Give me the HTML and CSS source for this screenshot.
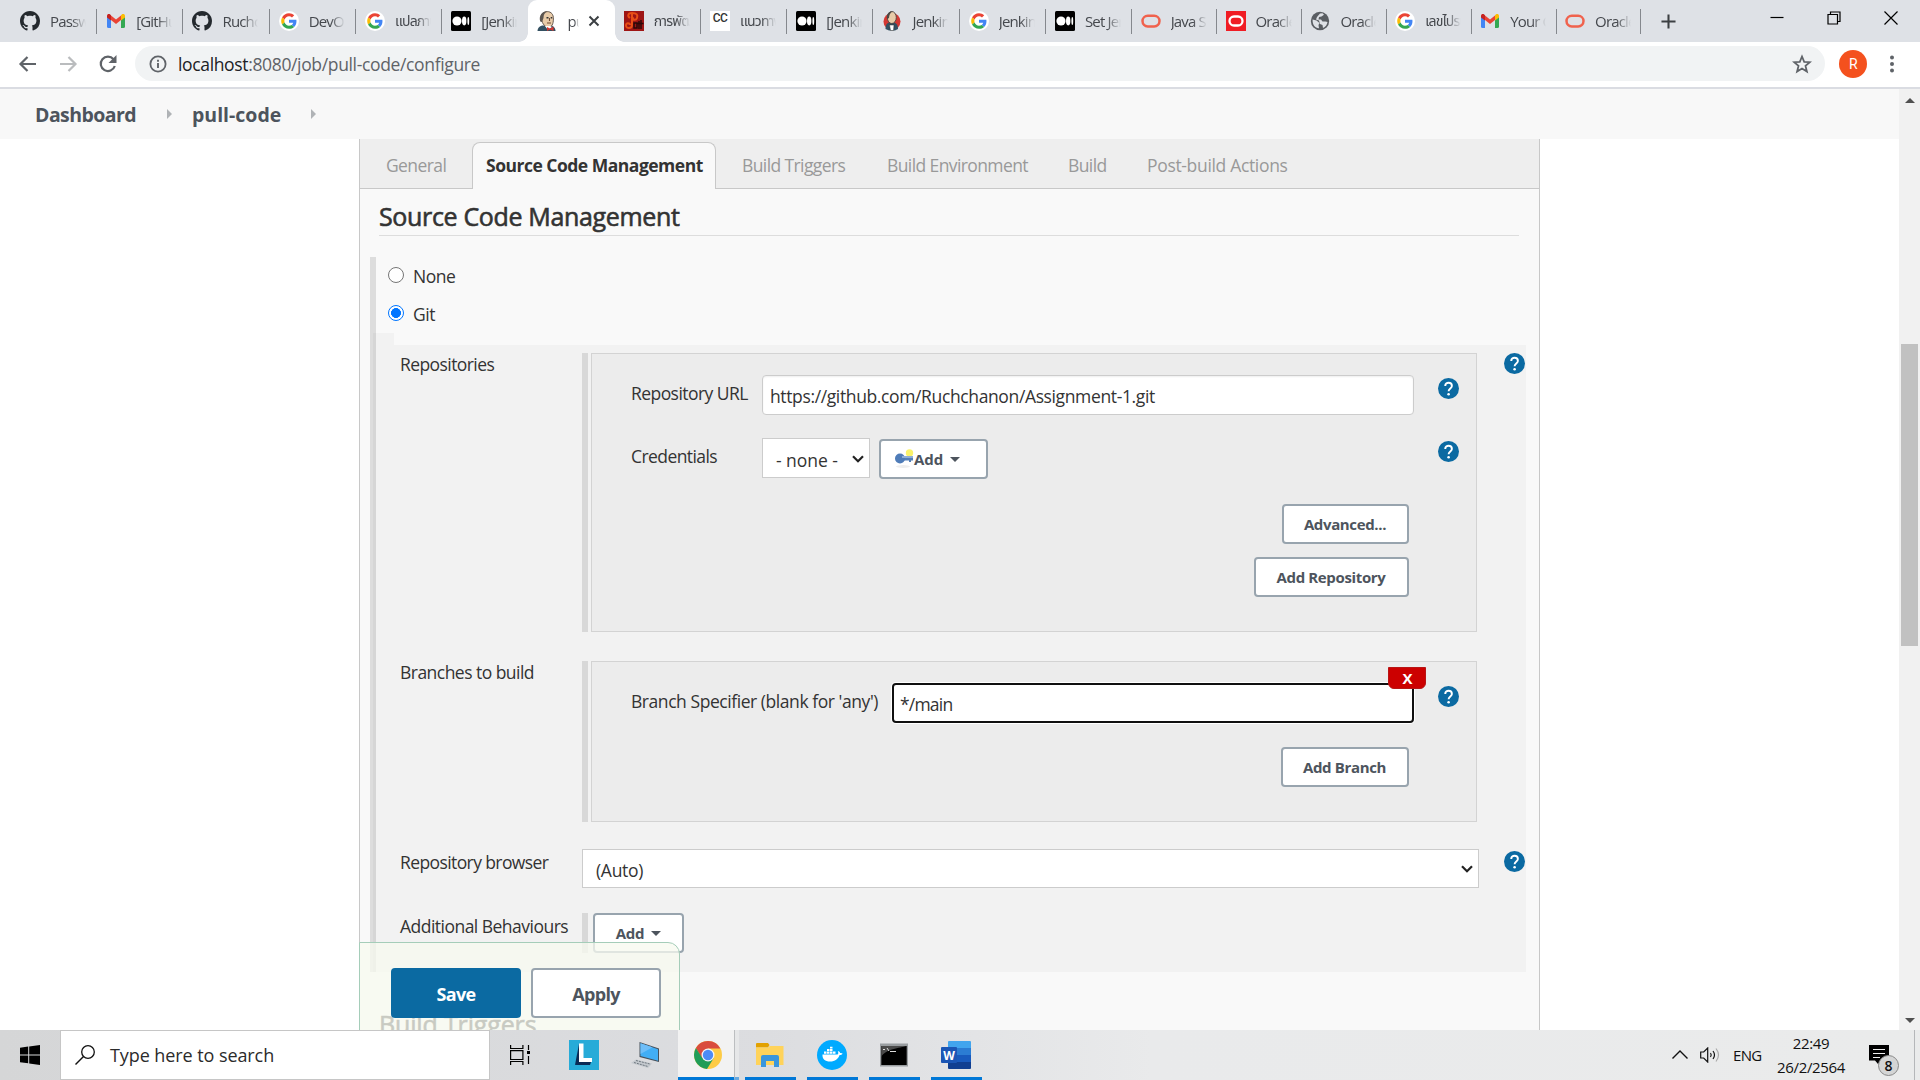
FILE: index.html
```html
<!DOCTYPE html>
<html lang="en">
<head>
<meta charset="utf-8">
<title>pull-code Config [Jenkins]</title>
<link rel="stylesheet" href="styles.css">
</head>
<body>
<svg class="defs" aria-hidden="true">
  <symbol id="github" viewBox="0 0 16 16"><path fill="#24292e" d="M8 0C3.58 0 0 3.58 0 8c0 3.54 2.29 6.53 5.47 7.59.4.07.55-.17.55-.38 0-.19-.01-.82-.01-1.49-2.01.37-2.53-.49-2.69-.94-.09-.23-.48-.94-.82-1.13-.28-.15-.68-.52-.01-.53.63-.01 1.08.58 1.23.82.72 1.21 1.87.87 2.33.66.07-.52.28-.87.51-1.07-1.78-.2-3.64-.89-3.64-3.95 0-.87.31-1.59.82-2.15-.08-.2-.36-1.02.08-2.12 0 0 .67-.21 2.2.82.64-.18 1.32-.27 2-.27s1.36.09 2 .27c1.53-1.04 2.2-.82 2.2-.82.44 1.1.16 1.92.08 2.12.51.56.82 1.27.82 2.15 0 3.07-1.87 3.75-3.65 3.95.29.25.54.73.54 1.48 0 1.07-.01 1.93-.01 2.2 0 .21.15.46.55.38A8.01 8.01 0 0 0 16 8c0-4.42-3.58-8-8-8z"/></symbol>
  <symbol id="gmail" viewBox="0 0 20 20"><path fill="#4285f4" d="M1 5v10.500q0 1.500 1.500 1.500H5V8z"/><path fill="#34a853" d="M19 5v10.500q0 1.500-1.500 1.500H15V8z"/><path fill="#ea4335" d="M5 4.500l5 4 5-4V9l-5 4-5-4z"/><path fill="#c5221f" d="M1 5c0-2 2-2.500 3.200-1.500L5 4.200V9.500L1 6.500z"/><path fill="#fbbc04" d="M19 5c0-2-2-2.500-3.200-1.500L15 4.200V9.500l4-3z"/></symbol>
  <symbol id="google" viewBox="0 0 20 20"><circle cx="10" cy="10" r="10" fill="#fff"/><g transform="translate(2.200 2.200) scale(.325)"><path fill="#ea4335" d="M24 9.500c3.540 0 6.710 1.220 9.210 3.600l6.850-6.850C35.900 2.380 30.470 0 24 0 14.620 0 6.510 5.380 2.560 13.220l7.980 6.190C12.430 13.720 17.740 9.500 24 9.500z"/><path fill="#4285f4" d="M46.980 24.550c0-1.570-.15-3.090-.38-4.550H24v9.020h12.940c-.58 2.960-2.260 5.480-4.780 7.180l7.730 6c4.510-4.180 7.090-10.360 7.090-17.650z"/><path fill="#fbbc05" d="M10.530 28.590c-.48-1.450-.76-2.990-.76-4.590s.27-3.140.76-4.590l-7.980-6.190C.92 16.460 0 20.120 0 24s.92 7.540 2.560 10.780z"/><path fill="#34a853" d="M24 48c6.480 0 11.930-2.130 15.890-5.810l-7.730-6c-2.150 1.450-4.920 2.300-8.160 2.300-6.260 0-11.570-4.220-13.470-9.910l-7.980 6.190C6.510 42.620 14.620 48 24 48z"/></g></symbol>
  <symbol id="medium" viewBox="0 0 20 20"><rect width="20" height="20" rx="1.500"/><circle cx="6" cy="10" r="4.600" fill="#fff"/><ellipse cx="13.200" cy="10" rx="2.200" ry="4.400" fill="#fff"/><ellipse cx="17.300" cy="10" rx=".9" ry="3.900" fill="#fff"/></symbol>
  <symbol id="jenkins" viewBox="0 0 20 20"><path fill="#335061" d="M.5 20c0-3 2-5.500 6-5.500h6.500c3.500 0 5.500 2.500 5.500 5.500z"/><path fill="#e8cba8" stroke="#5a4d44" stroke-width=".9" d="M4.500 6C4.500 2.500 7 .6 10.300.6c4 0 6.300 3 6.100 7.400 0 5-1.600 8.300-5 8.300C7.500 16.300 4 11 4.500 6z"/><path fill="#5b5550" d="M3.200 10.500C1.500 4 5.500.2 10.500.3 7.500 1.500 6.500 4 6.500 7L5 11z"/><path fill="#333" d="M9.500 6h2v1.500h-2zM13.700 6h1.600v1.500h-1.600z"/><path stroke="#6d4b35" stroke-width="1.100" d="M10 12h4M12.500 7v3"/><path fill="#fff" d="M8 15l3 4 4-3-2-1z"/><path fill="#d33833" d="M10 16l3 1.500 3.500-2V20l-3.500-1.600L10 20z"/></symbol>
  <symbol id="jenkins-red" viewBox="0 0 20 20"><circle cx="10" cy="10.500" r="8.500" fill="#d33833"/><path fill="#335061" d="M3.500 18c0-5 2-7 6-7s6.500 2 6.500 7l-3 1.500h-6z"/><ellipse cx="9.800" cy="6.500" rx="4.500" ry="6" fill="#e8cba8" stroke="#49423d" stroke-width=".9"/><path fill="#4c4743" d="M5.200 8C4 3 7 .3 10.500.5 8 2 7.200 4 7 7z"/><path fill="#fff" stroke="#333" stroke-width=".5" d="M7.500 14h4.500l-.5 5.500H8.500z"/></symbol>
  <symbol id="soft" viewBox="0 0 20 20"><rect width="20" height="20" fill="#9e1515"/><path fill="none" stroke="#e84e16" stroke-width="2" d="M6 7c-3-2-2-5 2-5 5 0 6 2 5 5s-5 2-4-1M8 3v11c0 4-6 4-6 .5S6 12 6 14"/><path fill="none" stroke="#2a0808" stroke-width="1.500" d="M10 12v5h3v-5zM15 10v8M17 9v9M13.500 12.500h6"/></symbol>
  <symbol id="oracle" viewBox="0 0 20 20"><rect x="1.500" y="4.800" width="17" height="10.600" rx="5.300" fill="none" stroke="#f0624d" stroke-width="2.500"/></symbol>
  <symbol id="oracle-red" viewBox="0 0 20 20"><rect width="20" height="20" fill="#f01c24"/><rect x="3.500" y="5.500" width="13" height="9" rx="4.500" fill="none" stroke="#fff" stroke-width="2.300"/></symbol>
  <symbol id="globe" viewBox="0 0 20 20"><circle cx="10" cy="10" r="9.200" fill="#5a5e63"/><path fill="#dee1e6" d="M2.600 8.500l3.900 1 3 2.500-1 2 .5 3.300C5 17 2.300 13.500 2.600 8.500zM10 2.600l2.500-.3 1.500 1.500-2.500 1.700-2.500.5-.5 2.500H11l1.500 2h3l2 .5c-.5 3-2 5-4.500 6l-.5-3-2.500-1-1-3.500-3-1L7 6z"/></symbol>
  <symbol id="help" viewBox="0 0 21 21"><circle cx="10.500" cy="10.500" r="10.500" fill="#0b6aa2"/><path fill="none" stroke="#fff" stroke-width="1.900" d="M7.200 7.900c0-4.200 6.700-4.200 6.700 0 0 2.400-3.300 2.700-3.300 5.300"/><circle cx="10.600" cy="16.200" r="1.300" fill="#fff"/></symbol>
  <symbol id="chev" viewBox="0 0 12 8"><path fill="none" stroke="#222" stroke-width="2.200" d="M1 1.200l5 5 5-5"/></symbol>
</svg>

<div class="tabstrip">
  <div class="tab"><svg><use href="#github"/></svg><span>Password</span></div>
  <div class="tab"><svg><use href="#gmail"/></svg><span>[GitHub]</span></div>
  <div class="tab"><svg><use href="#github"/></svg><span>Ruchchanon</span></div>
  <div class="tab"><svg><use href="#google"/></svg><span>DevOps</span></div>
  <div class="tab thai"><svg><use href="#google"/></svg><span>แปลภาษา</span></div>
  <div class="tab plain"><svg><use href="#medium"/></svg><span>[Jenkins]</span></div>
  <div class="tab active"><svg><use href="#jenkins"/></svg><span>pull</span><svg class="close" viewBox="0 0 12 12"><path d="M1.500 1.500l9 9M10.500 1.500l-9 9" stroke="#3c4043" stroke-width="2"/></svg></div>
  <div class="tab thai"><svg><use href="#soft"/></svg><span>การพัฒนา</span></div>
  <div class="tab thai"><i class="cc">CC</i><span>แนวทาง</span></div>
  <div class="tab"><svg><use href="#medium"/></svg><span>[Jenkins]</span></div>
  <div class="tab"><svg><use href="#jenkins-red"/></svg><span>Jenkins</span></div>
  <div class="tab"><svg><use href="#google"/></svg><span>Jenkins</span></div>
  <div class="tab"><svg><use href="#medium"/></svg><span>Set Jenkins</span></div>
  <div class="tab slim"><svg><use href="#oracle"/></svg><span>Java SE</span></div>
  <div class="tab slim"><svg><use href="#oracle-red"/></svg><span>Oracle</span></div>
  <div class="tab slim"><svg><use href="#globe"/></svg><span>Oracle</span></div>
  <div class="tab slim thai"><svg><use href="#google"/></svg><span>เลขไปรษณีย์</span></div>
  <div class="tab slim"><svg><use href="#gmail"/></svg><span>Your Oracle</span></div>
  <div class="tab slim"><svg><use href="#oracle"/></svg><span>Oracle</span></div>
  <svg class="newtab" viewBox="0 0 16 16"><path d="M8 .5v15M.5 8h15" stroke="#3c4043" stroke-width="2.200"/></svg>
  <div class="winctl">
    <svg viewBox="0 0 14 14"><path d="M.5 6.500h13" stroke="#000" stroke-width="1.200"/></svg>
    <svg viewBox="0 0 14 14"><path d="M1 3.500h9.500V13H1zM3.500 3.500V1H13v9.500h-2.500" fill="none" stroke="#000" stroke-width="1.200"/></svg>
    <svg viewBox="0 0 14 14"><path d="M.5.5l13 13M13.500.5l-13 13" stroke="#000" stroke-width="1.200"/></svg>
  </div>
</div>

<div class="toolbar">
  <svg class="nav" viewBox="0 0 20 20"><path d="M18 10H3M9.500 3L2.500 10l7 7" fill="none" stroke="#5f6368" stroke-width="2.200"/></svg>
  <svg class="nav" viewBox="0 0 20 20"><path d="M2 10h15M10.500 3l7 7-7 7" fill="none" stroke="#babcbe" stroke-width="2.200"/></svg>
  <svg class="nav" viewBox="0 0 20 20"><path d="M16.800 12A7.200 7.200 0 1 1 15.500 5.200" fill="none" stroke="#5f6368" stroke-width="2.200"/><path fill="#5f6368" d="M18.500 1v8h-8z"/></svg>
  <div class="omnibox">
    <svg class="info" viewBox="0 0 18 18"><circle cx="9" cy="9" r="7.600" fill="none" stroke="#5f6368" stroke-width="1.800"/><path d="M9 8v5M9 4.800v1.900" stroke="#5f6368" stroke-width="1.900"/></svg>
    <span><b>localhost</b>:8080/job/pull-code/configure</span>
    <svg class="star" viewBox="0 0 20 20"><path d="M10 2.500l2.200 5.300 5.700.4-4.400 3.700 1.400 5.600-4.900-3-4.900 3 1.400-5.600-4.400-3.700 5.700-.4z" fill="none" stroke="#5f6368" stroke-width="1.800"/></svg>
  </div>
  <div class="avatar">R</div>
  <svg class="dots" viewBox="0 0 6 18"><circle cx="3" cy="2.500" r="2" /><circle cx="3" cy="9" r="2"/><circle cx="3" cy="15.500" r="2"/></svg>
</div>

<div class="viewport">
  <main class="page">
    <nav class="crumbs">
      <a class="dash">Dashboard</a><i class="arrow"></i><a class="job">pull-code</a><i class="arrow"></i>
    </nav>
    <section class="config">
      <div class="config-tabs">
        <span class="t-general">General</span>
        <span class="t-scm">Source Code Management</span>
        <span class="t-trig">Build Triggers</span>
        <span class="t-env">Build Environment</span>
        <span class="t-build">Build</span>
        <span class="t-post">Post-build Actions</span>
      </div>
      <h2>Source Code Management</h2>
      <div class="group">
        <label class="radio"><i></i>None</label>
        <label class="radio on"><i></i>Git</label>
        <div class="nub"></div>
        <div class="git">
          <div class="row">
            <span class="label l-rep">Repositories</span>
            <i class="drag"></i>
            <div class="box box-repo">
              <div class="field">
                <span class="flabel f-url">Repository URL</span>
                <div class="input in-url">https://github.com/Ruchchanon/Assignment-1.git</div>
                <svg class="help h-url"><use href="#help"/></svg>
              </div>
              <div class="field cred">
                <span class="flabel f-cred">Credentials</span>
                <div class="select s-none">- none -<svg><use href="#chev"/></svg></div>
                <div class="btn b-key"><svg viewBox="0 0 20 22"><ellipse cx="9" cy="18.500" rx="7" ry="1.500" fill="#eee"/><circle cx="15.500" cy="5" r="3.700" fill="#fbf36a"/><path d="M7 8h12v4.500h-2v1.500h-2v-1.500H7z" fill="#5580b8"/><circle cx="6" cy="10.500" r="5" fill="#4f7cb8"/><path d="M8 9h11" stroke="#a9c2e2" stroke-width="1.400"/></svg>Add<i class="caret"></i></div>
                <svg class="help h-cred"><use href="#help"/></svg>
              </div>
              <div class="actions">
                <div class="btn b-adv">Advanced...</div>
                <div class="btn b-repo">Add Repository</div>
              </div>
            </div>
            <svg class="help h-side"><use href="#help"/></svg>
          </div>
          <div class="row r-branch">
            <span class="label l-branch">Branches to build</span>
            <i class="drag"></i>
            <div class="box box-branch">
              <div class="field">
                <span class="flabel f-spec">Branch Specifier (blank for 'any')</span>
                <div class="input in-branch">*/main<b class="del">X</b></div>
                <svg class="help h-branch"><use href="#help"/></svg>
              </div>
              <div class="actions a-branch">
                <div class="btn b-branch">Add Branch</div>
              </div>
            </div>
          </div>
          <div class="row r-browser">
            <span class="label">Repository browser</span>
            <div class="select s-auto">(Auto)<svg><use href="#chev"/></svg></div>
            <svg class="help h-browser"><use href="#help"/></svg>
          </div>
          <div class="row r-behav">
            <span class="label l-behav">Additional Behaviours</span>
            <i class="drag"></i>
            <div class="btn b-add">Add<i class="caret"></i></div>
          </div>
        </div>
      </div>
      <h2 class="next">Build Triggers</h2>
    </section>
    <div class="savebar"><div class="btn save">Save</div><div class="btn apply">Apply</div></div>
  </main>
  <div class="scroll"><i class="up"></i><div class="thumb"></div><i class="down"></i></div>
</div>

<footer class="taskbar">
  <div class="start"><svg viewBox="0 0 20 20"><path d="M0 2.800L8.200 1.600V9.400H0zM9.200 1.500L20 0v9.400H9.200zM0 10.400h8.200v7.900L0 17.200zM9.200 10.400H20V20L9.200 18.500z"/></svg></div>
  <div class="search"><svg viewBox="0 0 20 20"><circle cx="13" cy="7" r="6.300" fill="none" stroke="#111" stroke-width="1.300"/><path d="M8.500 11.500L.5 19.500" stroke="#111" stroke-width="1.400"/></svg>Type here to search</div>
  <div class="task tv"><svg width="20" height="20" viewBox="0 0 20 20"><path d="M.6 0v3.500h12.300V0M.6 20v-3.500h12.300V20M.6 5.600h12.300v8.900H.6zM18.500 0v5M18.500 11v8" fill="none" stroke="#000" stroke-width="1.200"/><path d="M17 6h3v3h-3z"/></svg></div>
  <div class="task lt"><svg width="30" height="30" viewBox="0 0 30 30"><path fill="#27abd8" d="M0 0h30v30H0z"/><path fill="#0b2a55" d="M10 4L6 25l5-2z"/><path fill="#0b2a55" d="M6 25l4-3 12 0-1 3z"/><path fill="#fff" d="M10 3.500h4.500V18H23v4H10z"/></svg></div>
  <div class="task pc"><svg width="28" height="27" viewBox="0 0 28 27"><path fill="#47505a" d="M8.500 0L28 6.500V20L8.500 15z"/><path fill="#42aef5" d="M9.500 1.300l17.500 6v11.500L9.500 14z"/><path fill="#6fbef8" d="M9.500 1.300l12 4L9.500 12z"/><path fill="#c3c8cd" d="M5 17.500l16 4-4 4.500-17-5z"/><path stroke="#707880" fill="none" stroke-dasharray="2 1" d="M5 18.500l14 3.500M3 20.500l14 4"/></svg></div>
  <div class="task chrome"><svg width="28" height="28" viewBox="0 0 28 28"><circle cx="14" cy="14" r="14" fill="#fdcb45"/><path fill="#d94c3d" d="M14 14V7.500h12.400A14 14 0 0 0 1.900 7L8 17.500z"/><path fill="#1f9d58" d="M1.900 7A14 14 0 0 0 13 28l6.500-10.500L14 14 8.400 17.300z"/><circle cx="14" cy="14" r="6.500" fill="#f5f5f5"/><circle cx="14" cy="14" r="5.200" fill="#4c8bf5"/></svg></div>
  <div class="stack"></div>
  <div class="task app"><svg width="28" height="24" viewBox="0 0 28 24"><path fill="#e2a100" d="M0 1q0-1 1-1h11l1.500 2-1.500 2.500H0z"/><path fill="#ffd35a" d="M0 4.500h12L14 3h13.500v19H0z"/><path fill="#3a96dd" d="M5 24V14q0-2 2-2h14q2 0 2 2v10h-5v-6h-8v6z"/></svg></div>
  <div class="task app"><svg width="30" height="30" viewBox="0 0 30 30"><circle cx="15" cy="15" r="15" fill="#00aaff"/><path fill="#fff" d="M5.500 14.500h15c1-.5 1-2 .3-3 .8-.7 2 .2 2.300 1.500 1-.2 2 0 2.500.5-.5 1.300-1.800 1.500-3 1.500-1.500 4-4.500 6.500-9.500 6.500-5 0-8-2.500-7.600-7z"/><path fill="#fff" d="M7 11.500h2.500v2.300H7zM10 11.500h2.500v2.300H10zM13 11.500h2.500v2.300H13zM16 11.500h2.500v2.300H16zM10 9h2.500v2H10zM13 9h2.500v2H13zM13 6.800h2.500v1.700H13z"/></svg></div>
  <div class="task app"><svg width="28" height="24" viewBox="0 0 28 24"><path fill="#999da0" d="M0 .5h28v23H0z"/><path d="M1.300 3h25.400v19H1.300z"/><path fill="#4a4a4a" d="M1.300 3h25.400C20 5 5 6 1.300 14z"/><path d="M3 6.500h2M7 5l2 3M10 8.500h6" stroke="#ddd"/></svg></div>
  <div class="task app"><svg width="30" height="28" viewBox="0 0 30 28"><path fill="#41a5ee" d="M7 1q0-1 1-1h21q1 0 1 1v6H7z"/><path fill="#2b7cd3" d="M7 7h23v7H7z"/><path fill="#185abd" d="M7 14h23v7H7z"/><path fill="#103f91" d="M7 21h23v6q0 1-1 1H8q-1 0-1-1z"/><rect y="6" width="16" height="16" rx="1" fill="#1b56b5"/><text x="8" y="18.500" text-anchor="middle" class="word">W</text></svg></div>
  <div class="tray">
    <svg class="up" viewBox="0 0 16 9"><path d="M.5 8.500L8 1l7.500 7.500" fill="none" stroke="#111" stroke-width="1.400"/></svg>
    <svg class="vol" viewBox="0 0 20 16"><path d="M.7 5h3l4-4v14l-4-4h-3z" fill="none" stroke="#111" stroke-width="1.200"/><path d="M10.500 6q1.500 2 0 4M13 4q3 4 0 8" fill="none" stroke="#111" stroke-width="1.200"/><path d="M16 1.500q5 6.500 0 13" fill="none" stroke="#aaa" stroke-width="1.200"/></svg>
    <span class="lang">ENG</span>
    <div class="clock"><span>22:49</span><span>26/2/2564</span></div>
    <div class="notif"><svg viewBox="0 0 20 20"><path d="M0 0h20v15.500h-8L9 19l-3-3.500H0z"/><path d="M4 4.500h12M4 8.500h12M4 12.500h7" stroke="#eee" stroke-width="1.200"/></svg><b>8</b></div>
  </div>
</footer>
</body>
</html>
```
FILE: styles.css
```css
* { box-sizing: border-box; }
html, body { margin: 0; height: 1080px; overflow: hidden; }
body {
  display: flex; flex-direction: column; width: 1920px; background: #fff;
  font-family: "Open Sans", "Noto Sans", "Noto Sans Thai", sans-serif;
  font-size: 17.5px; letter-spacing: -.5px; color: #333; white-space: nowrap;
}
svg { display: block; flex: none; }
.defs { position: absolute; width: 0; height: 0; }
i { font-style: normal; }

/* browser tabs */
.tabstrip { display: flex; height: 42px; flex: none; padding-left: 10.8px; background: #dee1e6; }
.tab { position: relative; display: flex; align-items: center; width: 86.26px; padding: 0 0 0 9.2px; flex: none; }
.tab.slim { width: 84.9px; padding-left: 8.600px; }
.tab::after { content: ""; position: absolute; right: 0; top: 9px; width: 1px; height: 25px; background: #85888d; }
.tab.plain::after { display: none; }
.tab > svg, .cc { width: 20px; height: 20px; flex: none; }
.cc { background: #fff; font: 500 12px/15px Roboto, sans-serif; text-align: center; color: #333; }
.tab span {
  width: 36px; margin-left: 10px; overflow: hidden; font-size: 15px; line-height: 24px; color: #45484d; letter-spacing: -.85px;
  -webkit-mask-image: linear-gradient(90deg, #000 60%, transparent); mask-image: linear-gradient(90deg, #000 60%, transparent);
}
.tab.thai span { font-size: 14px; letter-spacing: -.8px; }
.tab.active { background: #fff; border-radius: 9px 9px 0 0; }
.tab.active::before, .tab.active::after {
  content: ""; display: block; position: absolute; top: auto; bottom: 0; width: 9px; height: 9px;
}
.tab.active::before { left: -9px; background: radial-gradient(circle at 0 0, transparent 8.500px, #fff 9px); }
.tab.active::after { right: -9px; background: radial-gradient(circle at 100% 0, transparent 8.500px, #fff 9px); }
.tab.active span { width: 12px; }
.tab .close { width: 12px; height: 12px; margin-left: 9px; }
.newtab { width: 15px; height: 15px; margin: 13.500px 0 0 20px; }
.winctl { display: flex; gap: 43px; margin: 11px 0 0 94px; }
.winctl svg { width: 14px; height: 14px; }

/* browser toolbar */
.toolbar { display: flex; align-items: center; height: 47px; flex: none; padding: 0 0 2px 18px; background: #fff; border-bottom: 2px solid #dadce2; }
.nav { width: 20px; height: 20px; margin-right: 20px; }
.omnibox { display: flex; align-items: center; width: 1690px; height: 35px; margin-left: -3px; padding: 0 13px 0 14px; border-radius: 18px; background: #f1f3f4; color: #5f6368; letter-spacing: -.35px; }
.omnibox b { font-weight: 400; color: #202124; }
.omnibox span { padding-top: 1px; }
.info { width: 18px; height: 18px; margin-right: 11px; }
.star { width: 20px; height: 20px; margin: 1px 0 0 auto; }
.avatar { width: 28px; height: 28px; margin: 1px 0 0 14px; border-radius: 50%; background: #f4511e; color: #fff; font: 14px/28px Roboto, sans-serif; text-align: center; }
.dots { width: 6px; height: 18px; margin-left: 22px; fill: #5f6368; }

/* page */
.viewport { display: flex; height: 941px; flex: none; }
.page { position: relative; width: 1899px; overflow: hidden; }
.scroll { display: flex; flex-direction: column; align-items: center; width: 21px; background: #f1f1f1; }
.scroll .up, .scroll .down { border: 5px solid transparent; }
.scroll .up { margin-top: 4px; border-bottom-color: #505050; }
.scroll .down { margin: auto 0 7px; border-top-color: #505050; border-bottom-width: 0; }
.thumb { width: 17px; height: 302px; margin-top: 241px; background: #c1c1c1; }

.crumbs { display: flex; align-items: center; height: 50px; padding: 0 0 0 35px; background: #f8f8f8; font-size: 19.500px; font-weight: 700; color: #4d545d; }
.dash { width: 132px; letter-spacing: -.55px; }
.job { width: 119px; margin-left: 20px; letter-spacing: 0; }
.arrow { border: 5px solid transparent; border-left-color: #b0b3b6; border-right-width: 0; }

.config { width: 1181px; height: 900px; margin-left: 359px; border: solid #c8c8c8; border-width: 0 1px; background: #f9f9f9; }
.config-tabs { display: flex; height: 50px; border-bottom: 1px solid #c8c8c8; background: #eee; color: #999; letter-spacing: -.6px; line-height: 52px; }
.t-general { width: 112px; padding-left: 26px; }
.t-scm { width: 244px; height: 47px; margin: 3px 26px 0 0; padding-left: 13px; border: 1px solid #c8c8c8; border-bottom: 0; border-radius: 8px 8px 0 0; background: #f9f9f9; color: #333; font-weight: 700; letter-spacing: -.5px; line-height: 45px; }
.t-trig { width: 145px; }
.t-env { width: 181px; }
.t-build { width: 79px; }
.t-post { letter-spacing: -.33px; }

h2 { height: 47px; width: 1140px; margin: 0 0 0 19px; padding-top: 12px; border-bottom: 1px solid #ddd; font-size: 25px; line-height: 30px; font-weight: 400; letter-spacing: -.34px; -webkit-text-stroke: .6px #333; }
h2.next { margin-top: 25px; letter-spacing: -.15px; }
.group { width: 1156px; height: 715px; margin: 21px 0 0 10px; border-left: 6px solid #ddd; }
.radio { display: flex; align-items: center; height: 38px; padding-left: 12px; gap: 9px; }
.radio i { width: 16px; height: 16px; margin-top: -2px; border: 1px solid #767676; border-radius: 50%; background: #fff; }
.radio.on i { border: 1.500px solid #0075ff; background: radial-gradient(circle, #0075ff 4.700px, #fff 5.200px); }
.nub { width: 21px; height: 12px; margin-left: -3px; background: rgba(0,0,0,.027); }
.git { width: 1153px; height: 627px; margin-left: -3px; padding: 8px 0 0 27px; background: rgba(0,0,0,.027); }
.row { display: flex; }
.label { width: 182px; line-height: 22px; flex: none; letter-spacing: -.6px; }
.l-rep { letter-spacing: -.58px; }
.l-behav { letter-spacing: -.52px; }
.drag { width: 6px; margin-right: 3px; flex: none; background: #d8d8d8; }
.box { width: 886px; padding: 21px 0 0 39.500px; border: 1px solid #d3d3d3; background: #ececec; }
.box-repo { height: 279px; }
.box-branch { height: 161px; }
.field { display: flex; align-items: flex-start; width: 827px; }
.cred { margin-top: 24px; }
.flabel { flex: none; margin-left: -.5px; }
.f-url { width: 131px; line-height: 37px; letter-spacing: -.56px; }
.f-cred { width: 131px; line-height: 35px; letter-spacing: -.58px; }
.f-spec { width: 261px; line-height: 37px; letter-spacing: -.44px; }
.input, .select { border: 1px solid #ccc; background: #fff; }
.input { position: relative; height: 40px; padding-left: 7px; border-radius: 4px; line-height: 40px; box-shadow: inset 0 1px 2px rgba(0,0,0,.07); }
.in-url { width: 652px; letter-spacing: -.37px; }
.in-branch { width: 522px; padding-left: 6px; border: 2px solid #101010; line-height: 38px; box-shadow: 0 0 0 1px #fff; letter-spacing: -.8px; }
.del { position: absolute; right: -14px; top: -18px; width: 38px; height: 22px; border: 1px solid #b81515; border-radius: 0 0 6px 6px; background: #c00; color: #fff; font-size: 15px; line-height: 20px; text-align: center; }
.help { width: 21px; height: 21px; }
.h-url { margin: 3px 0 0 23.500px; }
.h-cred { margin: 2px 0 0 auto; }
.h-branch { margin: 3px 0 0 23.500px; }
.h-side { margin-left: 27px; }
.h-browser { margin: 2px 0 0 25px; }
.select { position: relative; display: flex; align-items: center; padding: 3px 0 0 13px; }
.select svg { width: 12px; height: 8px; margin: -2px 5px 0 auto; }
.s-none { width: 108px; height: 40px; margin-top: -1px; letter-spacing: -.05px; }
.s-auto { width: 897px; height: 39px; letter-spacing: -.3px; }
.btn { display: flex; align-items: center; justify-content: center; height: 40px; border: 2px solid #98a4ae; border-radius: 4px; background: #fff; color: #4d545d; font-size: 15px; font-weight: 700; letter-spacing: -.36px; }
.caret { margin-left: 7px; border: 5px solid transparent; border-top-color: #4d545d; border-bottom-width: 0; }
.b-key { width: 109px; margin-left: 9px; justify-content: flex-start; padding-left: 13px; letter-spacing: -.1px; }
.b-key svg { width: 20px; height: 22px; }
.actions { display: flex; flex-direction: column; align-items: flex-end; gap: 13px; width: 777px; margin-top: 25px; }
.a-branch { margin-top: 24px; }
.b-adv { width: 127px; }
.b-repo { width: 155px; }
.b-branch { width: 128px; }
.r-branch { margin-top: 29px; }
.l-branch { letter-spacing: -.53px; }
.r-browser { margin-top: 27px; }
.r-browser .label, .r-behav .label { padding-top: 2px; }
.r-behav { margin-top: 25px; }
.b-add { width: 91px; margin-left: 2px; }

.savebar { position: absolute; left: 359px; top: 853px; width: 321px; height: 100px; display: flex; gap: 10px; padding: 25px 0 0 31px; border: 1px solid #a5cdb9; border-top-right-radius: 12px; background: rgba(247,250,239,.76); }
.savebar .btn { width: 130px; height: 50px; font-size: 18px; letter-spacing: -.7px; padding-top: 2px; }
.savebar .save { border-color: #0b6aa2; background: #0b6aa2; color: #fff; }

/* taskbar */
.taskbar { display: flex; height: 50px; flex: none; background: linear-gradient(90deg, #d5d6d7, #dcdde0 40%, #e9eaeb 60%, #eaebeb); }
.start { width: 60px; padding: 15px 0 0 20px; }
.start svg { width: 20px; height: 20px; }
.search { display: flex; align-items: center; gap: 15px; width: 430px; padding-left: 14px; border: 1px solid #c6c6c6; background: #fff; font-size: 18px; letter-spacing: -.08px; color: #2b2b2b; }
.search svg { width: 20px; height: 20px; }
.task { display: flex; align-items: center; justify-content: center; height: 50px; flex: none; }
.tv { width: 60px; }
.lt { width: 68px; }
.pc { width: 54px; }
.chrome { width: 56px; margin-left: 6px; border-bottom: 3px solid #0078d7; background: #f2f2f2; }
.task.chrome, .task.app { padding-top: 3px; }
.task.chrome { padding-left: 3px; }
.stack { width: 5px; border-left: 1px solid #bcbec0; border-bottom: 3px solid #66a9e0; background: #e6e7e8; }
.app { width: 51px; margin-left: 6px; padding-right: 1px; border-bottom: 3px solid #0078d7; }
.app + .app { margin-left: 11px; }
.word { font: 700 12px "Open Sans", sans-serif; fill: #fff; letter-spacing: 0; }
.tray { display: flex; width: 248px; margin-left: auto; color: #111; font-size: 15px; letter-spacing: -.6px; }
.tray .up { width: 16px; height: 9px; margin-top: 20px; }
.vol { width: 20px; height: 16px; margin: 17px 0 0 12px; }
.lang { width: 30px; margin: 14px 0 0 13px; line-height: 22px; letter-spacing: -.7px; }
.clock { display: flex; flex-direction: column; align-items: center; width: 76px; margin: 1px 0 0 10px; line-height: 24px; letter-spacing: -.35px; }
.notif { position: relative; width: 51px; margin: 15px 0 0 auto; }
.notif::after { content: ""; position: absolute; right: 5px; top: -15px; width: 1px; height: 50px; background: #b5b7b9; }
.notif svg { width: 20px; height: 20px; }
.notif b { position: absolute; left: 9px; top: 10px; width: 21px; height: 21px; border: 1px solid #888; border-radius: 50%; background: #d4d5d5; font-size: 14px; font-weight: 600; line-height: 19px; text-align: center; letter-spacing: 0; }
```
